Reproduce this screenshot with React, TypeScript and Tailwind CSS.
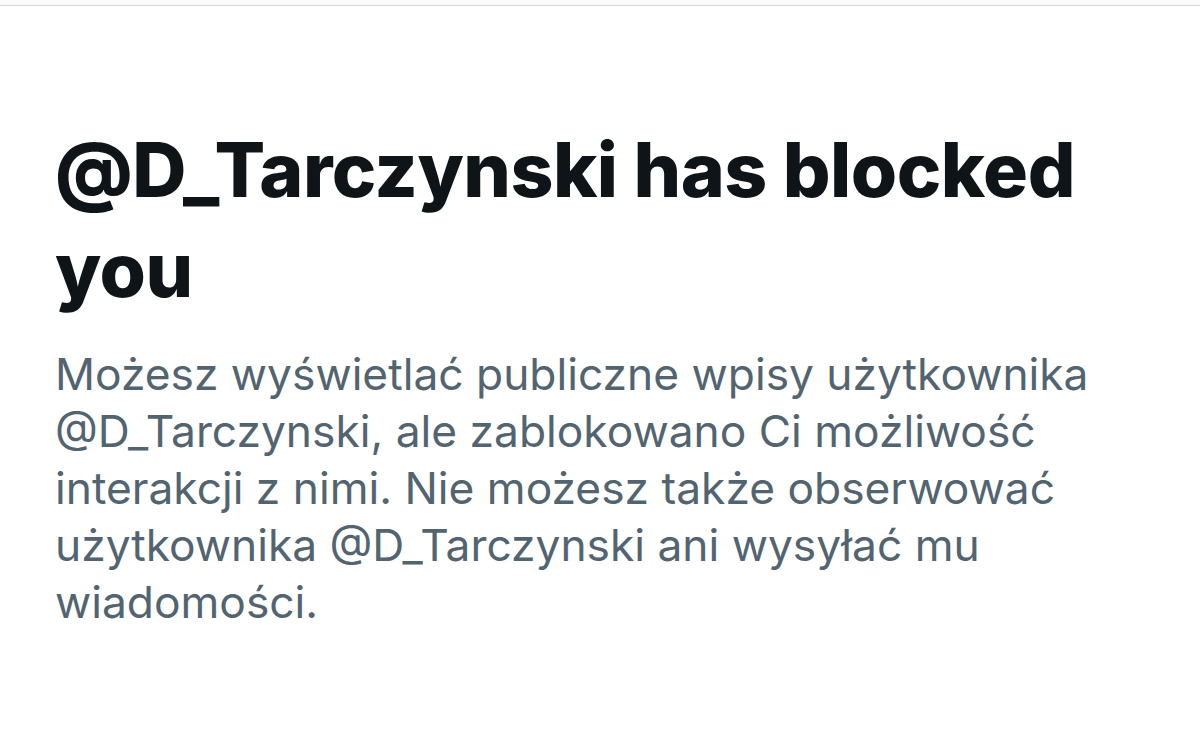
export default function App() {
  return (
    <main
      className="min-h-screen w-full bg-white"
      style={{ fontFamily: "Inter, 'Noto Sans', sans-serif" }}
    >
      <div className="h-[6px] border-b border-[#d6d6d6] bg-[#fafafa]" />
      <section className="px-[55px] pt-[114px]">
        <h1 className="text-[75px] font-extrabold leading-[100px] tracking-[-0.5px] text-[#0f1419]">
          @D_Tarczynski has blocked you
        </h1>
        <p className="mt-[26px] text-[44.3px] leading-[57px] text-[#536471]">
          Możesz wyświetlać publiczne wpisy użytkownika @D_Tarczynski, ale
          zablokowano Ci możliwość interakcji z nimi. Nie możesz także
          obserwować użytkownika @D_Tarczynski ani wysyłać mu wiadomości.
        </p>
      </section>
    </main>
  );
}
